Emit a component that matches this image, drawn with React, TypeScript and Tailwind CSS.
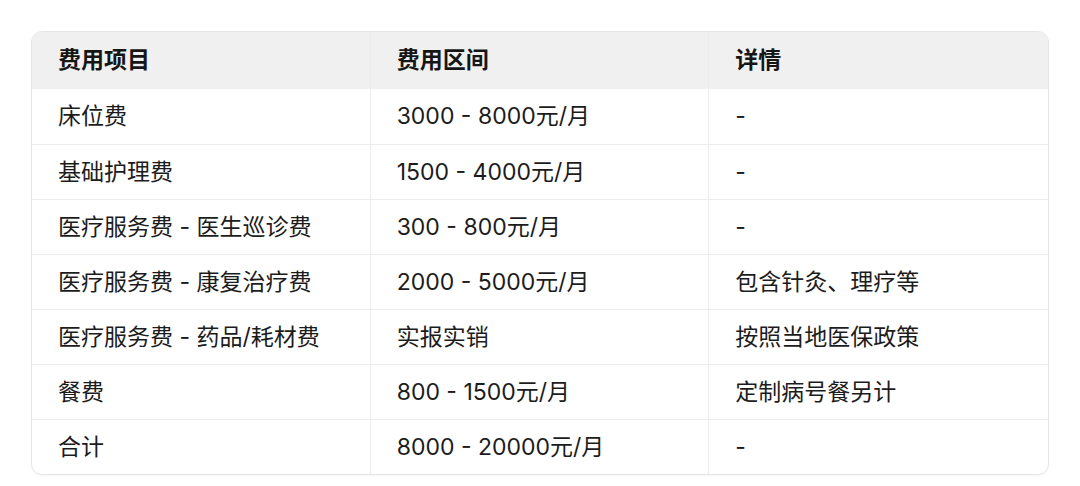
import React from "react";

const rows: [string, string, string][] = [
  ["床位费", "3000 - 8000元/月", "-"],
  ["基础护理费", "1500 - 4000元/月", "-"],
  ["医疗服务费 - 医生巡诊费", "300 - 800元/月", "-"],
  ["医疗服务费 - 康复治疗费", "2000 - 5000元/月", "包含针灸、理疗等"],
  ["医疗服务费 - 药品/耗材费", "实报实销", "按照当地医保政策"],
  ["餐费", "800 - 1500元/月", "定制病号餐另计"],
  ["合计", "8000 - 20000元/月", "-"],
];

function Cell({ children, head, last }: { children: React.ReactNode; head?: boolean; last?: boolean }) {
  return (
    <div
      className={`flex items-center px-[26px] ${last ? "" : "border-r border-[#ececec]"} ${
        head ? "font-semibold text-[#161616]" : "text-[#1c1c1c]"
      }`}
    >
      {children}
    </div>
  );
}

export default function App() {
  return (
    <div
      className="w-[1080px] h-[486px] bg-white pt-[31px] pl-[31px]"
      style={{ fontFamily: 'Inter, "Noto Sans CJK SC", sans-serif' }}
    >
      <div className="w-[1018px] rounded-[11px] border border-[#e6e6e6] overflow-hidden text-[23px] shadow-[0_1px_2px_rgba(0,0,0,0.04)]">
        <div className="grid grid-cols-3 h-[57px] bg-[#f0f0f0]">
          <Cell head>费用项目</Cell>
          <Cell head>费用区间</Cell>
          <Cell head last>详情</Cell>
        </div>
        {rows.map((r, i) => (
          <div
            key={i}
            className={`grid grid-cols-3 h-[55px] ${i > 0 ? "border-t border-[#ececec]" : ""}`}
          >
            <Cell>{r[0]}</Cell>
            <Cell>{r[1]}</Cell>
            <Cell last>{r[2]}</Cell>
          </div>
        ))}
      </div>
    </div>
  );
}
